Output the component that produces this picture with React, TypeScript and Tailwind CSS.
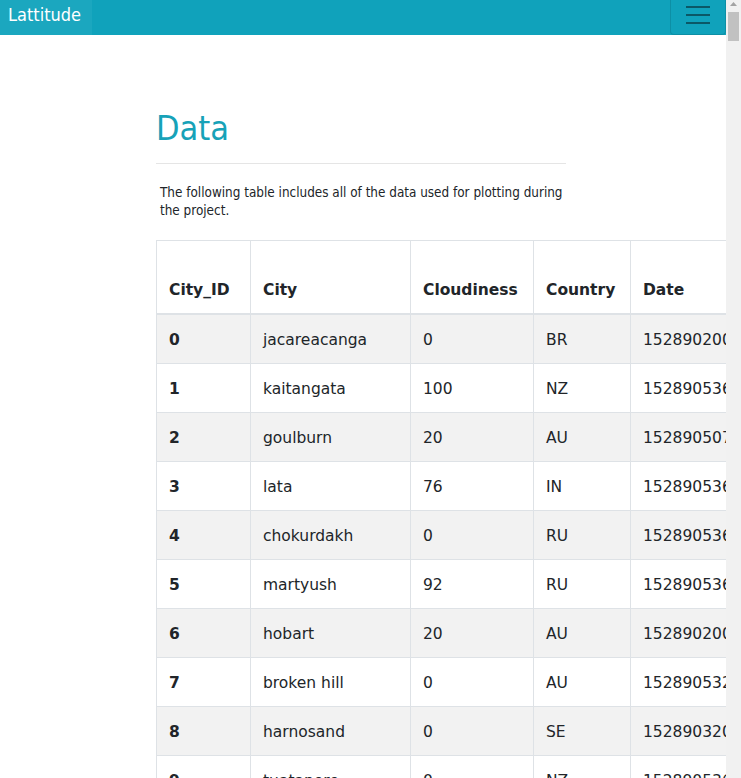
import React from 'react';

const rows: (string | number)[][] = [
    [0, 'jacareacanga', 0, 'BR', 1528902000, 62, -6.22, -57.76, 89.2, 4.97],
    [1, 'kaitangata', 100, 'NZ', 1528905360, 89, -46.28, 169.85, 46.45, 3.29],
    [2, 'goulburn', 20, 'AU', 1528905072, 75, -34.75, 149.72, 44.6, 6.93],
    [3, 'lata', 76, 'IN', 1528905361, 71, 30.78, 78.62, 71.35, 1.81],
    [4, 'chokurdakh', 0, 'RU', 1528905362, 78, 70.62, 147.9, 39.37, 6.49],
    [5, 'martyush', 92, 'RU', 1528905363, 66, 56.4, 61.88, 55.4, 8.95],
    [6, 'hobart', 20, 'AU', 1528902000, 81, -42.88, 147.33, 42.8, 6.93],
    [7, 'broken hill', 0, 'AU', 1528905321, 51, -31.97, 141.45, 53.6, 9.17],
    [8, 'harnosand', 0, 'SE', 1528903200, 59, 62.63, 17.94, 59.0, 5.82],
    [9, 'tuatapere', 0, 'NZ', 1528905364, 85, -46.13, 167.69, 47.53, 4.18],
    [10, 'saint-philippe', 75, 'CA', 1528903200, 83, 45.36, -73.48, 64.4, 3.36],
];

const headers = ['City_ID', 'City', 'Cloudiness', 'Country', 'Date', 'Humidity', 'Lat', 'Lng', 'Max Temp', 'Wind Speed'];
const widths = ['w-[94px]', 'w-[160px]', 'w-[123px]', 'w-[97px]', 'w-[130px]', 'w-[110px]', 'w-[90px]', 'w-[90px]', 'w-[80px]', 'w-[80px]'];

const App = () => {
    return (
        <div className="flex h-[778px] overflow-hidden bg-white text-[#212529] font-['DejaVu_Sans',sans-serif]">
            <div className="flex-1 min-w-0 overflow-hidden">
                {/* Navbar */}
                <nav className="flex h-[35px] justify-between bg-[#10a2bb]">
                    <a className="w-[92px] bg-[#1ba7bf] pl-2 pt-1 text-[18px] leading-[21px] text-white font-['DejaVu_Sans_Condensed','DejaVu_Sans',sans-serif]">
                        Lattitude
                    </a>
                    <button className="flex w-[56px] flex-col gap-[6px] rounded-b-[4px] border border-t-0 border-[#0d8fa5] pl-[15px] pt-[6px]">
                        <span className="block h-[2px] w-[24px] bg-[#0b5866]"></span>
                        <span className="block h-[2px] w-[24px] bg-[#0b5866]"></span>
                        <span className="block h-[2px] w-[24px] bg-[#0b5866]"></span>
                    </button>
                </nav>

                <main className="pl-[156px]">
                    <h1 className="mt-[73px] text-[34px] leading-[41px] text-[#17a2b8] font-['DejaVu_Sans_Condensed','DejaVu_Sans',sans-serif]">
                        Data
                    </h1>
                    <hr className="mt-[14px] w-[410px] border-[#e5e5e5]" />
                    <p className="mt-[20px] w-[410px] pl-1 text-[13.4px] leading-[18px] text-[#212529] font-['DejaVu_Sans_Condensed','DejaVu_Sans',sans-serif]">
                        The following table includes all of the data used for plotting during the project.
                    </p>

                    <table className="mt-[20px] w-[1054px] table-fixed border-collapse border border-[#dee2e6] text-[15.5px] leading-6">
                        <colgroup>
                            {widths.map((w, i) => (
                                <col key={i} className={w} />
                            ))}
                        </colgroup>
                        <thead>
                            <tr className="h-[73px]">
                                {headers.map((h) => (
                                    <th
                                        key={h}
                                        className="border border-b-2 border-[#dee2e6] px-3 pt-3 pb-[11px] text-left align-bottom font-bold"
                                    >
                                        {h}
                                    </th>
                                ))}
                            </tr>
                        </thead>
                        <tbody>
                            {rows.map((r, idx) => (
                                <tr key={idx} className={idx % 2 === 0 ? 'bg-[#f2f2f2]' : 'bg-white'}>
                                    {r.map((c, j) =>
                                        j === 0 ? (
                                            <th key={j} className="border border-[#dee2e6] px-3 pt-[13px] pb-[11px] text-left font-bold">
                                                {c}
                                            </th>
                                        ) : (
                                            <td key={j} className="whitespace-nowrap border border-[#dee2e6] px-3 pt-[13px] pb-[11px]">
                                                {c}
                                            </td>
                                        )
                                    )}
                                </tr>
                            ))}
                        </tbody>
                    </table>
                </main>
            </div>

            {/* Scrollbar */}
            <div className="flex w-[15px] flex-col items-center bg-[#f1f1f1]">
                <svg width="7" height="5" viewBox="0 0 7 5" className="mt-[2px]">
                    <polygon points="3.5,0 7,4 0,4" fill="#a3a3a3" />
                </svg>
                <div className="mt-[5px] ml-[2px] mr-[1px] h-[29px] w-[11px] self-start bg-[#c1c1c1]"></div>
            </div>
        </div>
    );
};

export default App;
